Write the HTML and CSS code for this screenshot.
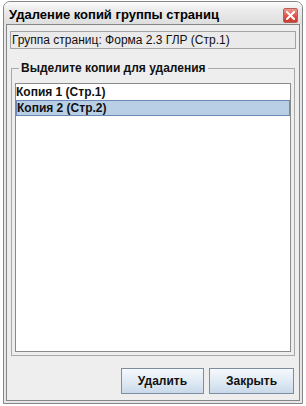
FILE: index.html
```html
<!DOCTYPE html>
<html lang="ru">
<head>
<meta charset="utf-8">
<link rel="stylesheet" href="styles.css">
</head>
<body>
<div class="window">
  <div class="titlebar">
    <span class="title">Удаление копий группы страниц</span>
    <span class="close" aria-label="Закрыть">
      <svg width="9" height="9" viewBox="0 0 9 9"><path d="M1 1L8 8M8 1L1 8" stroke="#fff" stroke-width="2" stroke-linecap="square"/></svg>
    </span>
  </div>
  <div class="client">
    <div class="group-field">Группа страниц: Форма 2.3 ГЛР (Стр.1)</div>
    <fieldset class="copies">
      <legend>Выделите копии для удаления</legend>
      <ul class="list">
        <li class="item">Копия 1 (Стр.1)</li>
        <li class="item selected">Копия 2 (Стр.2)</li>
      </ul>
    </fieldset>
    <div class="buttons">
      <button class="btn btn-delete">Удалить</button>
      <button class="btn btn-close">Закрыть</button>
    </div>
  </div>
</div>
</body>
</html>
```
FILE: styles.css
```css
html, body {
  margin: 0;
  padding: 0;
  background: #ffffff;
}
body {
  font-family: "Liberation Sans", Arial, sans-serif;
  color: #111;
}
.window {
  margin: 1px 0 0 3px;
  width: 300px;
  height: 403px;
  box-sizing: border-box;
  border: 1px solid #85858a;
  border-radius: 7px 7px 0 0;
  background: #e6e6e6;
  display: flex;
  flex-direction: column;
  padding: 0 2px 2px 2px;
}
.titlebar {
  height: 22px;
  flex: none;
  display: flex;
  align-items: center;
  justify-content: space-between;
  padding: 0 4px 0 5px;
  margin: 0 -2px;
  border-radius: 6px 6px 0 0;
  background: linear-gradient(#fcfcfc 0%, #ececec 35%, #dedede 100%);
}
.title {
  font-weight: bold;
  font-size: 13px;
  color: #000;
  padding-top: 2px;
}
.close {
  width: 13px;
  height: 13px;
  border-radius: 2px;
  background: linear-gradient(#ef9a90, #dc5447 55%, #c93c31);
  border: 1px solid #b4625c;
  display: flex;
  align-items: center;
  justify-content: center;
  margin-top: 5px;
}
.client {
  flex: 1;
  border: 1px solid #85858a;
  background: #eeeeee;
  display: flex;
  flex-direction: column;
  padding: 0 3px 0 3px;
}
.group-field {
  margin-top: 6px;
  height: 18px;
  box-sizing: border-box;
  border: 1px solid #a3a3a3;
  background: #eaeaea;
  font-size: 12px;
  line-height: 16px;
  padding-left: 1px;
  color: #111;
}
.copies {
  margin: 12px 1px 0 1px;
  padding: 8px 3px 3px 3px;
  border: 1px solid #a8a8a8;
  flex: 1;
  display: flex;
  flex-direction: column;
  min-height: 0;
}
.copies legend {
  font-weight: bold;
  font-size: 12px;
  padding: 0 2px;
  margin-left: 4px;
  color: #111;
}
.list {
  list-style: none;
  margin: 0;
  padding: 0;
  flex: 1;
  background: #ffffff;
  border: 1px solid #8a8a8a;
}
.item {
  height: 16px;
  box-sizing: border-box;
  font-weight: bold;
  font-size: 12px;
  line-height: 16px;
  color: #111;
}
.item.selected {
  background: #b8cfe5;
  border: 1px solid #6a88b8;
  line-height: 14px;
}
.buttons {
  display: flex;
  justify-content: flex-end;
  gap: 5px;
  padding: 12px 2px 6px 0;
}
.btn {
  height: 26px;
  box-sizing: border-box;
  border: 1px solid #7c8ea0;
  background: linear-gradient(#f6f9fc 0%, #e3ecf5 45%, #c9d9ea 100%);
  font-family: "Liberation Sans", Arial, sans-serif;
  font-weight: bold;
  font-size: 12px;
  color: #111;
  padding: 0;
}
.btn-delete { width: 83px; }
.btn-close { width: 85px; }
```
